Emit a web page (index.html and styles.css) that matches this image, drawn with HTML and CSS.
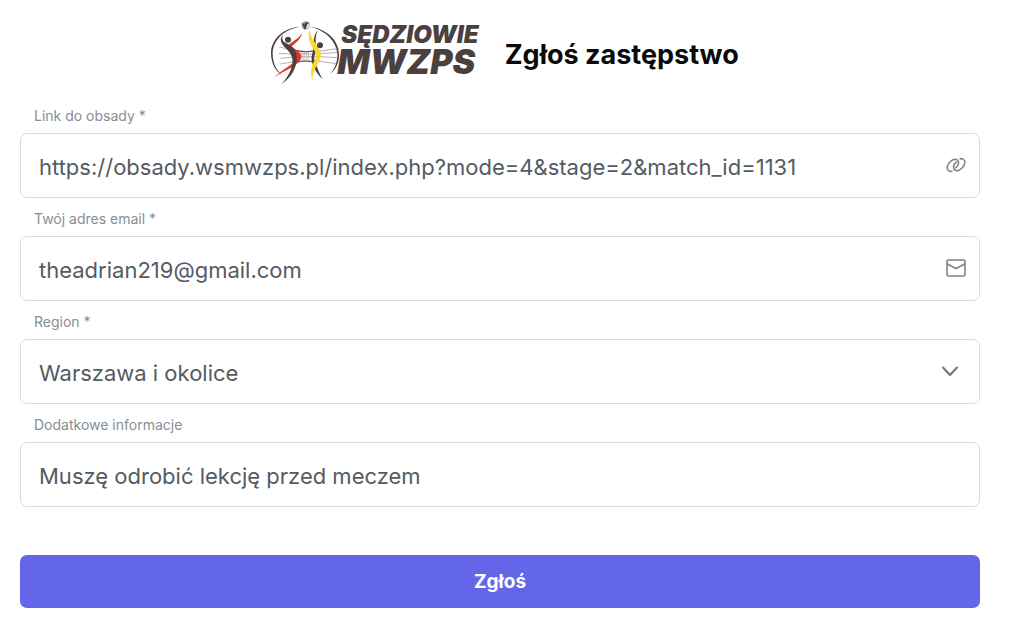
FILE: index.html
```html
<!DOCTYPE html>
<html lang="pl">
<head>
    <meta charset="UTF-8">
    <meta name="viewport" content="width=device-width, initial-scale=1.0">
    <title>Zgłoś zastępstwo</title>
    <link rel="stylesheet" href="styles.css">
</head>
<body>
    <main class="container">
        <header class="header">
            <a class="logo" href="#">
                <svg class="logo-mark" viewBox="20 18 216 198" fill="none" aria-hidden="true">
                    <!-- Ring -->
                    <path d="M116 38C62 40 27 76 26 116C26 146 38 170 58 182C40 166 31 146 31 118C32 80 62 46 116 38Z" fill="#4a403d"/>
                    <path d="M144 38C196 46 228 78 230 120C231 146 220 166 204 180C218 162 226 142 225 120C222 82 192 50 144 38Z" fill="#4a403d"/>
                    <!-- Ball -->
                    <circle cx="130" cy="34" r="12" fill="#e6e4e3" stroke="#a39e9c" stroke-width="2"/>
                    <path d="M121 28l5 12 4-15M128 44l5-16 6-2" stroke="#4a403d" stroke-width="5"/>
                    <!-- Net -->
                    <path d="M52 99Q130 124 230 103M50 118Q130 124 228 115M54 133Q130 124 226 131M54 150Q130 132 222 149" stroke="#8b8583" stroke-width="2"/>
                    <path d="M102 110Q128 118 158 110M100 146Q128 136 158 146" stroke="#4a403d" stroke-width="3"/>
                    <path d="M119 114v28M125 114v28M132 114v28M138 114v28" stroke="#a8a3a1" stroke-width="2"/>
                    <!-- Left player -->
                    <path d="M119 57C116 76 100 86 88 97C96 106 116 112 117 127C116 151 80 164 36 189C66 163 99 148 102 132C102 120 78 110 76 98C79 86 107 79 119 57Z" fill="#e23328"/>
                    <path d="M63 62C57 72 59 80 72 88C92 98 102 112 103 130C105 163 84 193 57 211C80 185 94 158 90 134C86 116 76 108 66 98C54 84 51 72 63 62Z" fill="#4a403d"/>
                    <circle cx="77" cy="77" r="9" fill="#4a403d"/>
                    <!-- Right player -->
                    <path d="M166 48C159 66 158 84 162 101C163 112 154 124 156 137C164 160 170 174 180 195C161 177 150 155 148 138C146 122 155 110 154 96C153 76 156 62 166 48Z" fill="#4a403d"/>
                    <path d="M141 45C144 65 152 78 162 92C171 105 179 118 175 130C169 148 154 163 150 199C142 170 148 152 158 138C164 128 161 116 152 103C140 86 137 68 141 45Z" fill="#f7d92f"/>
                    <circle cx="173" cy="94" r="9" fill="#4a403d"/>
                </svg>
                <span class="logo-text">
                    <span class="logo-top">SĘDZIOWIE</span>
                    <span class="logo-bottom">MWZPS</span>
                </span>
            </a>
            <h1 class="title">Zgłoś zastępstwo</h1>
        </header>

        <form class="form">
            <div class="field">
                <label for="link">Link do obsady *</label>
                <div class="control">
                    <input required type="url" id="link" name="link" value="https://obsady.wsmwzps.pl/index.php?mode=4&amp;stage=2&amp;match_id=1131">
                    <svg class="icon" viewBox="0 0 20 20" aria-hidden="true">
                        <path d="M6.5 15.8C4.400 17.200 1 15.700 1.100 12.600C1.400 8.700 5.600 4.400 9 4.300C12.300 4.300 13.200 7.200 12 9.800C11.400 11.200 10.500 12.300 9.300 13.300"/>
                        <path d="M13.5 4.200C15.600 2.800 19 4.300 18.900 7.400C18.600 11.300 14.400 15.600 11 15.700C7.700 15.700 6.800 12.800 8 10.200C8.600 8.800 9.500 7.700 10.700 6.700"/>
                    </svg>
                </div>
            </div>

            <div class="field">
                <label for="email">Twój adres email *</label>
                <div class="control">
                    <input required type="email" id="email" name="email" value="theadrian219@gmail.com">
                    <svg class="icon" viewBox="0 0 20 20" aria-hidden="true">
                        <rect x="1" y="2" width="18" height="16" rx="1.5"/>
                        <path d="M1.5 6L10 10.5L18.5 6"/>
                    </svg>
                </div>
            </div>

            <div class="field">
                <label for="region">Region *</label>
                <div class="control">
                    <select required id="region" name="region">
                        <option>Warszawa i okolice</option>
                    </select>
                    <svg class="icon icon-arrow" viewBox="0 0 20 20" aria-hidden="true">
                        <path d="M3 6.500L10 14L17 6.500"/>
                    </svg>
                </div>
            </div>

            <div class="field">
                <label for="info">Dodatkowe informacje</label>
                <div class="control">
                    <input type="text" id="info" name="info" value="Muszę odrobić lekcję przed meczem">
                </div>
            </div>

            <button class="btn" type="submit">Zgłoś</button>
        </form>
    </main>
</body>
</html>
```
FILE: styles.css
```css
* {
    box-sizing: border-box;
}

body {
    margin: 0;
    background: #fff;
    font-family: Inter, "Liberation Sans", sans-serif;
    color: #4b5563;
}

.container {
    padding: 20px 44px 28px 20px;
}

.header {
    display: flex;
    align-items: center;
    justify-content: center;
    gap: 26px;
    padding-left: 8px;
}

.logo {
    display: flex;
    align-items: flex-start;
    color: #4a403d;
    text-decoration: none;
}

.logo-mark {
    width: 72px;
    height: 66px;
}

.logo-text {
    display: flex;
    flex-direction: column;
    margin-left: -4px;
    padding-top: 2px;
    font-style: italic;
    font-weight: 900;
}

.logo-top {
    padding-left: 4px;
    font-size: 24px;
    line-height: 26px;
}

.logo-bottom {
    font-size: 34px;
    line-height: 28px;
}

.title {
    margin: 0;
    padding-top: 4px;
    font-size: 27px;
    line-height: 36px;
    font-weight: 700;
    color: #0a0a0a;
}

/* Form fields */
.form {
    display: flex;
    flex-direction: column;
    padding-top: 18px;
}

.field {
    display: flex;
    flex-direction: column;
    gap: 6px;
    margin-bottom: 9px;
}

.field label {
    padding: 0 14px;
    font-size: 14px;
    line-height: 23px;
    color: #868e96;
}

.control {
    position: relative;
}

.control input,
.control select {
    display: block;
    width: 100%;
    height: 65px;
    padding: 2px 56px 0 18px;
    border: 1px solid #d9dce2;
    border-radius: 7px;
    outline: none;
    background: #fff;
    font-family: inherit;
    font-size: 22px;
    color: #555b62;
    appearance: none;
}

.control input:focus,
.control select:focus {
    border-color: #6366e8;
}

/* Icons lie over the right end of the box */
.icon {
    position: absolute;
    top: 22px;
    right: 14px;
    width: 20px;
    height: 20px;
    fill: none;
    stroke: #7d848b;
    stroke-width: 1.6;
    pointer-events: none;
}

.icon-arrow {
    right: 20px;
    stroke: #6c757d;
    stroke-width: 2;
    stroke-linecap: round;
    stroke-linejoin: round;
}

.btn {
    height: 53px;
    margin-top: 39px;
    border: none;
    border-radius: 7px;
    background: #6366e8;
    font-family: inherit;
    font-size: 19px;
    font-weight: 700;
    color: #fff;
    cursor: pointer;
}

.btn:hover {
    background: #5256dc;
}
```
